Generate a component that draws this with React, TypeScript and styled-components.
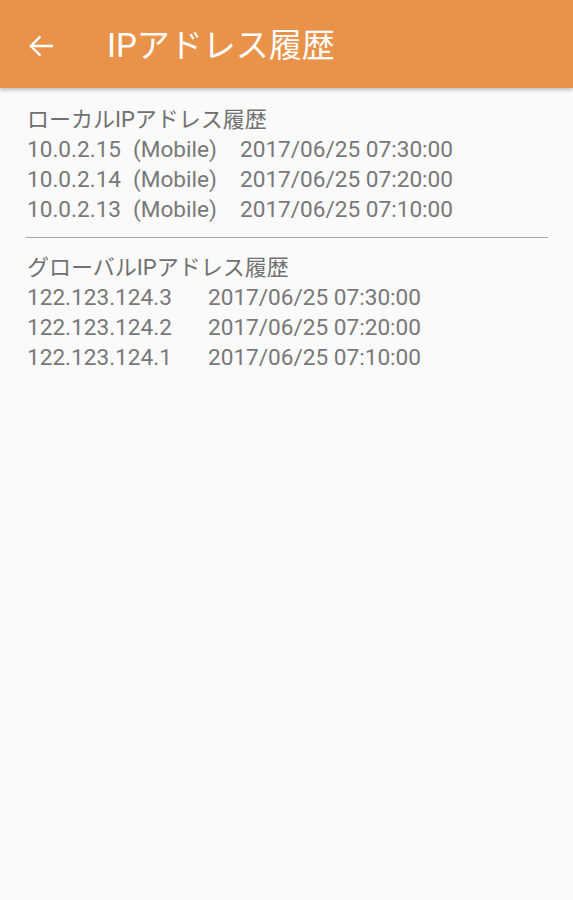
import React from "react";
import styled, {createGlobalStyle} from "styled-components";

const GlobalStyle = createGlobalStyle`
  html, body {
    margin: 0;
    padding: 0;
    background: #fafafa;
  }
  body {
    font-family: Roboto, "Noto Sans CJK JP", sans-serif;
  }
`;

const Screen = styled.div`
  display: flex;
  flex-flow: column nowrap;
  width: 573px;
  min-height: 900px;
  background: #fafafa;
`;

const Toolbar = styled.header`
  display: flex;
  flex-flow: row nowrap;
  align-items: center;
  height: 88px;
  padding-left: 23px;
  background: #e9924a;
  box-shadow: 0 2px 4px rgba(0, 0, 0, 0.25);
  position: relative;
  z-index: 1;
`;

const BackButton = styled.button`
  display: flex;
  align-items: center;
  justify-content: center;
  width: 36px;
  height: 36px;
  margin-top: 4px;
  padding: 0;
  border: none;
  background: transparent;
`;

const Title = styled.h1`
  margin: 4px 0 0 48px;
  color: #ffffff;
  font-family: Roboto, "Noto Sans CJK JP", sans-serif;
  font-weight: 400;
  font-size: 33px;
  line-height: 38px;
`;

const Content = styled.main`
  display: flex;
  flex-flow: column nowrap;
  padding: 17px 25px 0 27px;
`;

const Section = styled.section`
  display: flex;
  flex-flow: column nowrap;
`;

const SectionTitle = styled.div`
  color: #707070;
  font-size: 22px;
  line-height: 30px;
`;

const Row = styled.div<{ $columns: string }>`
  display: grid;
  grid-template-columns: ${p => p.$columns};
  color: #787878;
  font-size: 22.6px;
  line-height: 30px;
  white-space: pre;
`;

const Divider = styled.hr`
  margin: 12px 0 15px -1px;
  border: none;
  height: 1px;
  background: #a8a8a8;
`;

const localHistory = [
    {ip: "10.0.2.15", network: "(Mobile)", date: "2017/06/25 07:30:00"},
    {ip: "10.0.2.14", network: "(Mobile)", date: "2017/06/25 07:20:00"},
    {ip: "10.0.2.13", network: "(Mobile)", date: "2017/06/25 07:10:00"},
];

const globalHistory = [
    {ip: "122.123.124.3", date: "2017/06/25 07:30:00"},
    {ip: "122.123.124.2", date: "2017/06/25 07:20:00"},
    {ip: "122.123.124.1", date: "2017/06/25 07:10:00"},
];

const BackArrow = () => (
    <svg width="36" height="36" viewBox="0 0 24 24" fill="#ffffff">
        <path d="M20 11.2H7.1l5.1-5.1-1.1-1.1L4.1 12l7 7 1.1-1.1-5.1-5.1H20z"/>
    </svg>
);

export default function App() {
    return (
        <Screen>
            <GlobalStyle/>
            <Toolbar>
                <BackButton aria-label="back"><BackArrow/></BackButton>
                <Title>IPアドレス履歴</Title>
            </Toolbar>
            <Content>
                <Section>
                    <SectionTitle>ローカルIPアドレス履歴</SectionTitle>
                    {localHistory.map(item => (
                        <Row key={item.ip} $columns="106px 107px auto">
                            <span>{item.ip}</span>
                            <span>{item.network}</span>
                            <span>{item.date}</span>
                        </Row>
                    ))}
                </Section>
                <Divider/>
                <Section>
                    <SectionTitle>グローバルIPアドレス履歴</SectionTitle>
                    {globalHistory.map(item => (
                        <Row key={item.ip} $columns="181px auto">
                            <span>{item.ip}</span>
                            <span>{item.date}</span>
                        </Row>
                    ))}
                </Section>
            </Content>
        </Screen>
    );
}
